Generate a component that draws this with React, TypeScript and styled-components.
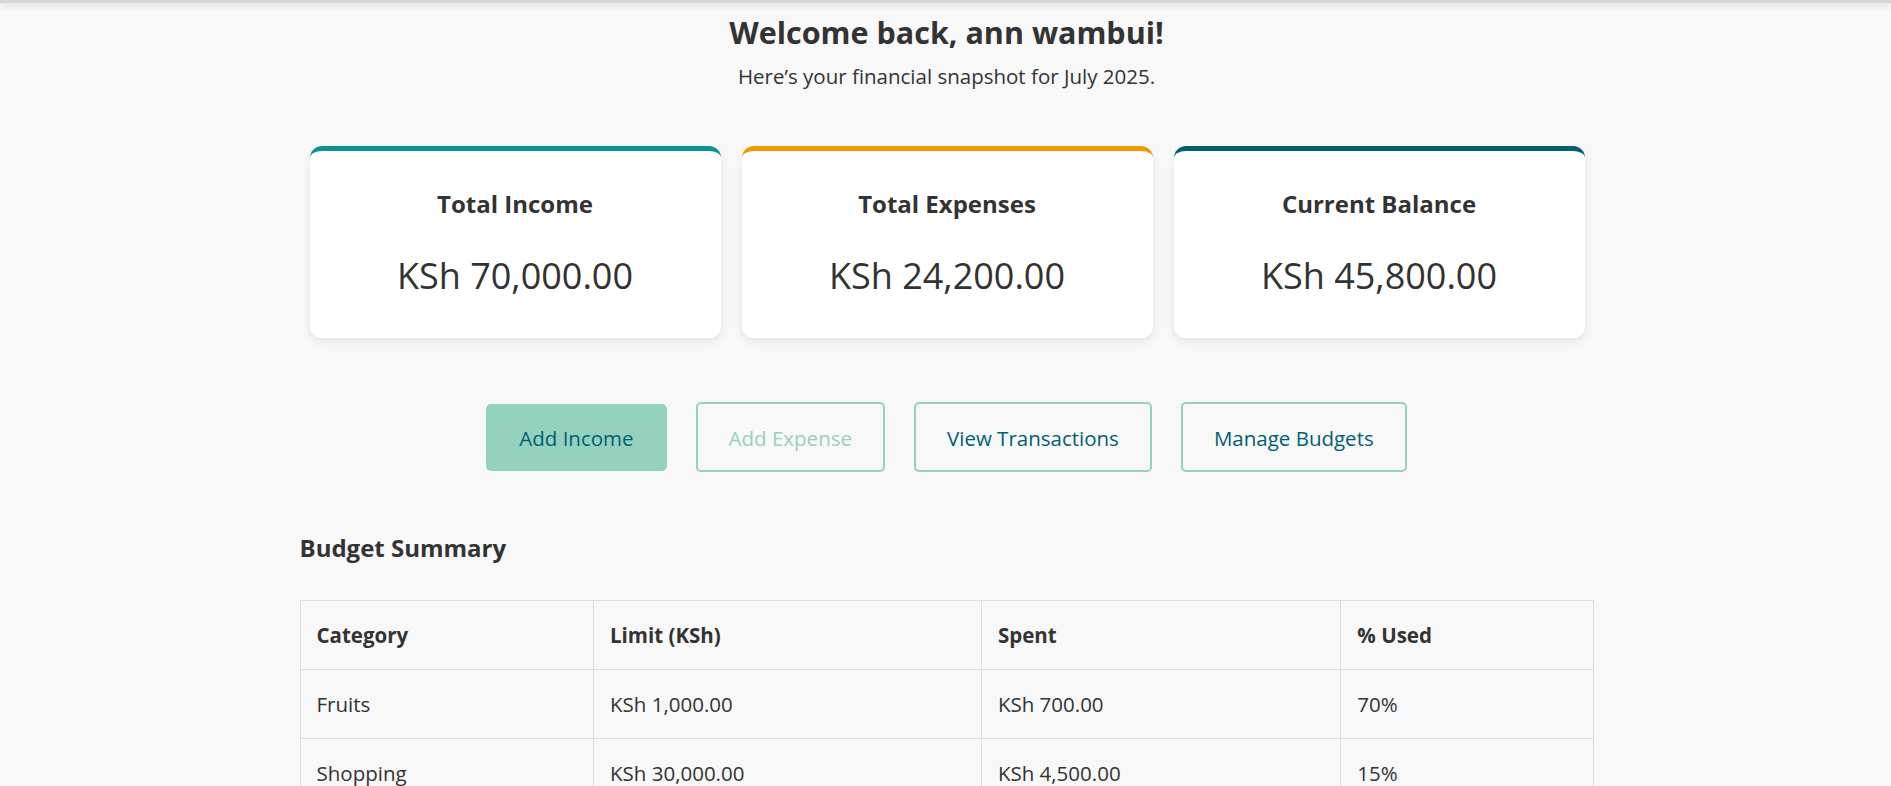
import styled, { createGlobalStyle } from 'styled-components';

type Summary = {
	label: string;
	amount: string;
	accent: string;
};

type Budget = {
	category: string;
	limit: string;
	spent: string;
	used: string;
};

const summaries: Summary[] = [
	{ label: 'Total Income', amount: 'KSh 70,000.00', accent: '#0a9396' },
	{ label: 'Total Expenses', amount: 'KSh 24,200.00', accent: '#ee9b00' },
	{ label: 'Current Balance', amount: 'KSh 45,800.00', accent: '#005f73' }
];

const budgets: Budget[] = [
	{ category: 'Fruits', limit: 'KSh 1,000.00', spent: 'KSh 700.00', used: '70%' },
	{ category: 'Shopping', limit: 'KSh 30,000.00', spent: 'KSh 4,500.00', used: '15%' }
];

const columns = [
	{ title: 'Category', width: '22.7%' },
	{ title: 'Limit (KSh)', width: '30%' },
	{ title: 'Spent', width: '27.8%' },
	{ title: '% Used', width: '19.5%' }
];

const GlobalStyle = createGlobalStyle`
	* {
		box-sizing: border-box;
	}

	body {
		margin: 0;
		background: #f8f8f8;
		color: #333;
		font-family: 'Segoe UI', 'Open Sans', sans-serif;
	}
`;

const TopEdge = styled.div`
	height: 3px;
	background: #d6d6d6;
	box-shadow: 0 2px 6px rgba(0, 0, 0, 0.18);
`;

const Main = styled.main`
	width: 1296px;
	margin: 0 auto;
	padding: 9px 0 0 2px;
`;

const Header = styled.header`
	text-align: center;
`;

const Title = styled.h1`
	margin: 0;
	font-size: 30.5px;
	line-height: 40px;
	font-weight: 700;
`;

const Subtitle = styled.p`
	margin: 10px 0 0;
	font-size: 20.5px;
	line-height: 28px;
`;

const CardRow = styled.section`
	display: grid;
	grid-template-columns: repeat(3, 1fr);
	gap: 21px;
	padding: 0 9px 0 10px;
	margin-top: 56px;
`;

const Card = styled.div<{ $accent: string }>`
	height: 192px;
	background: #fff;
	border-top: 5px solid ${(props) => props.$accent};
	border-radius: 12px;
	box-shadow: 0 4px 10px rgba(0, 0, 0, 0.08);
	padding-top: 37px;
	text-align: center;
`;

const CardLabel = styled.h3`
	margin: 0;
	font-size: 24px;
	line-height: 32px;
	font-weight: 700;
`;

const CardAmount = styled.p`
	margin: 32px 0 0;
	font-size: 36px;
	line-height: 48px;
`;

const Actions = styled.nav`
	display: flex;
	justify-content: center;
	align-items: center;
	gap: 29px;
	margin-top: 64px;
	height: 70px;
`;

const ActionButton = styled.button<{ $filled?: boolean; $muted?: boolean }>`
	font-family: inherit;
	font-size: 20.5px;
	line-height: 26px;
	padding: ${(props) => (props.$filled ? '19.5px 31px 17.5px' : '21px 31px 19px')};
	border: 2px solid #94d2bd;
	border-radius: 5px;
	background: ${(props) => (props.$filled ? '#94d2bd' : 'transparent')};
	color: ${(props) => (props.$muted ? '#94d2bd' : '#005f73')};
	cursor: pointer;
`;

const SectionTitle = styled.h3`
	margin: 61px 0 0;
	font-size: 24px;
	line-height: 30px;
	font-weight: 700;
`;

const Table = styled.table`
	width: 100%;
	margin-top: 37px;
	border-collapse: collapse;
	table-layout: fixed;
	font-size: 20.5px;
	line-height: 28px;
`;

const HeadCell = styled.th<{ $width: string }>`
	width: ${(props) => props.$width};
	padding: 20px 16px;
	border: 1px solid #ddd;
	text-align: left;
	font-weight: 700;
`;

const Cell = styled.td`
	padding: 20px 16px;
	border: 1px solid #ddd;
`;

const App = () => {
	return (
		<>
			<GlobalStyle />
			<TopEdge />
			<Main>
				<Header>
					<Title>Welcome back, ann wambui!</Title>
					<Subtitle>Here’s your financial snapshot for July 2025.</Subtitle>
				</Header>
				<CardRow>
					{summaries.map((item) => (
						<Card key={item.label} $accent={item.accent}>
							<CardLabel>{item.label}</CardLabel>
							<CardAmount>{item.amount}</CardAmount>
						</Card>
					))}
				</CardRow>
				<Actions>
					<ActionButton $filled>Add Income</ActionButton>
					<ActionButton $muted>Add Expense</ActionButton>
					<ActionButton>View Transactions</ActionButton>
					<ActionButton>Manage Budgets</ActionButton>
				</Actions>
				<SectionTitle>Budget Summary</SectionTitle>
				<Table>
					<thead>
						<tr>
							{columns.map((col) => (
								<HeadCell key={col.title} $width={col.width}>
									{col.title}
								</HeadCell>
							))}
						</tr>
					</thead>
					<tbody>
						{budgets.map((row) => (
							<tr key={row.category}>
								<Cell>{row.category}</Cell>
								<Cell>{row.limit}</Cell>
								<Cell>{row.spent}</Cell>
								<Cell>{row.used}</Cell>
							</tr>
						))}
					</tbody>
				</Table>
			</Main>
		</>
	);
};

export default App;
